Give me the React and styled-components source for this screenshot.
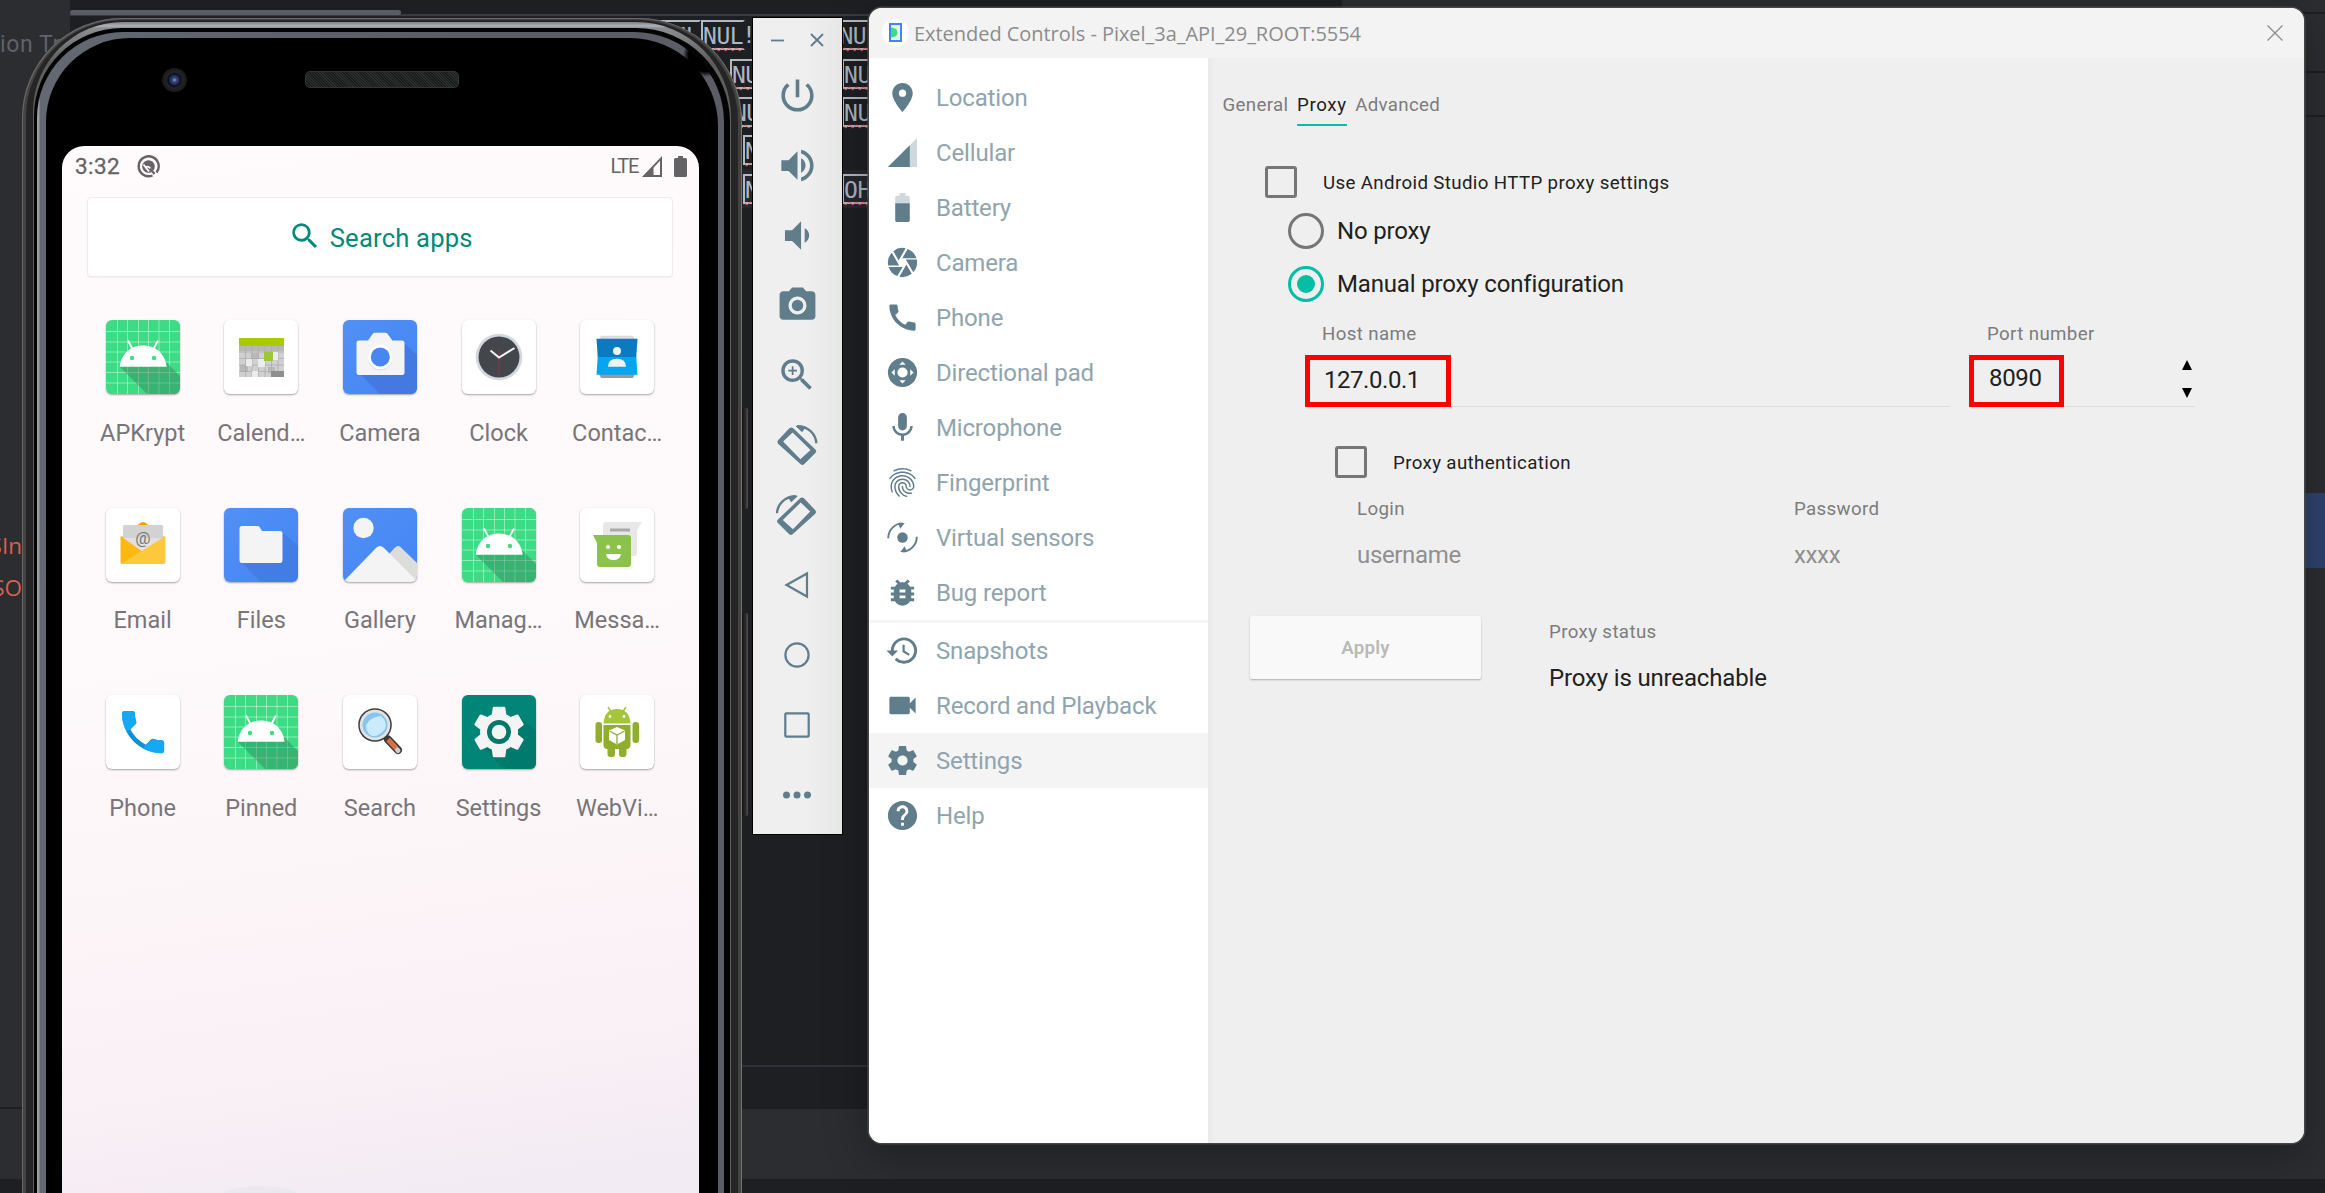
import React from "react";
import styled, { createGlobalStyle, css } from "styled-components";
import {
  MdPlace, MdCamera, MdCall, MdMic, MdFingerprint, MdBugReport, MdHistory, MdVideocam, MdHelp,
  MdPowerSettingsNew, MdVolumeUp, MdVolumeDown, MdPhotoCamera, MdZoomIn, MdSearch,
} from "react-icons/md";

const slate = "#607d8b";
const teal = "#00bfa5";

const GlobalStyle = createGlobalStyle`
  *, *::before, *::after { box-sizing: border-box; }
  html, body { margin: 0; padding: 0; }
  body { font-family: Roboto, "Liberation Sans", sans-serif; background: #1e1f22; overflow: hidden; }
  svg { display: block; flex: none; }
`;

const Desktop = styled.div`
  position: relative;
  width: 2325px;
  height: 1193px;
  overflow: hidden;
`;

/* ---------- IDE behind the windows ---------- */

const Ide = styled.div`
  display: flex;
  flex-direction: column;
  height: 100%;
  background: #1e1f22;
`;
const IdeMain = styled.div`
  display: flex;
  height: 1109px;
`;
const IdeTree = styled.div`
  width: 70px;
  flex: none;
  padding-top: 27px;
  background: #2b2d30;
  border-bottom: 2px solid #1e1f22;
  font-size: 23px;
  color: #5f6268;
  overflow: hidden;
  white-space: nowrap;
`;
const TreeLabel = styled.div`
  line-height: 36px;
  letter-spacing: 0.6px;
`;
const TreeErrors = styled.div`
  width: 22px;
  margin-top: 462px;
  display: flex;
  flex-direction: column;
  align-items: flex-end;
  font: 22.5px/42.4px "Open Sans", sans-serif;
  color: #d9604f;
`;
const Editor = styled.div`
  flex: 1;
  display: flex;
  flex-direction: column;
`;
const ScrollTrack = styled.div`
  height: 16px;
  padding-top: 10px;
  border-bottom: 2px solid #393b40;
`;
const ScrollThumb = styled.div`
  width: 331px;
  height: 5px;
  border-radius: 3px;
  background: #5a5d63;
`;
const CodeLine = styled.div`
  display: flex;
  align-items: center;
  height: 38.4px;
  padding-left: ${(p) => p.$indent}px;
  background: ${(p) => (p.$current ? "#26282e" : "transparent")};
`;
const Token = styled.span`
  height: 30px;
  margin-left: ${(p) => p.$gap || 0}px;
  border: 2px solid #b4b8bf;
  border-right-color: transparent;
  font: 23px/28px "DejaVu Sans Mono", monospace;
  letter-spacing: -0.5px;
  color: #a9b7c6;
  text-decoration: underline wavy #f75464 1px;
  text-underline-offset: 3px;
  white-space: pre;
`;
const Plain = styled.span`
  margin-left: -3px;
  font: 23px/28px "DejaVu Sans Mono", monospace;
  color: #a9b7c6;
  letter-spacing: -0.5px;
`;
const EditorFoot = styled.div`
  margin-top: auto;
  height: 44px;
  border-top: 2px solid #303238;
`;
const IdeRight = styled.div`
  width: 983px;
  flex: none;
  display: flex;
  flex-direction: column;
  background: #2b2d30;
`;
const RightRule = styled.div`
  height: ${(p) => p.$h}px;
  border-bottom: 2px solid #1e1f22;
`;
const RightSelection = styled.div`
  height: 75px;
  margin-top: 376px;
  background: #2e436e;
`;
const IdeBar = styled.div`
  height: 70px;
  background: #2b2d30;
`;

/* ---------- Emulator phone ---------- */

const Phone = styled.div`
  position: absolute;
  left: 22px;
  top: 18px;
  width: 720px;
  height: 1300px;
  padding: 2px 4px 0;
  border-radius: 100px 104px 0 0;
  background: #454243;
  box-shadow: inset 1px 1px 0 #6a6765, inset -1px 0 0 #77736f;
`;
const SideButton = styled.div`
  position: absolute;
  right: -6px;
  top: ${(p) => p.$top}px;
  width: 6px;
  height: ${(p) => p.$h}px;
  border-radius: 0 2px 2px 0;
  background: linear-gradient(90deg, #141414, #2c2b2b 60%, #545252);
`;
const Rail = styled.div`
  height: 100%;
  padding: 2px 7px 0;
  border-radius: 97px 101px 0 0;
  background: #262526;
`;
const Chrome = styled.div`
  height: 100%;
  padding: 6px 1px 0;
  border-radius: 90px 95px 0 0;
  background: linear-gradient(180deg, #7e8183, #b0b4b5 4px, #8b8e90 6px, #5e5e5e 40px);
`;
const Seam = styled.div`
  height: 100%;
  padding: 4px 6px 0 3px;
  border-radius: 88px 94px 0 0;
  background: #040404;
`;
const Glint = styled.div`
  height: 100%;
  padding: 6px 6px 0 9px;
  border-radius: 86px 90px 0 0;
  background:
    radial-gradient(circle 22px at calc(100% - 19px) 23px, #000 75%, transparent),
    linear-gradient(90deg, #9a9fa3 0, #9a9fa3 2px, #636873 3px, #5b5d66 60%);
`;
const Face = styled.div`
  display: flex;
  flex-direction: column;
  height: 100%;
  padding: 0 19px 0 16px;
  border-radius: 84px 88px 0 0;
  background: #000;
`;
const Sensors = styled.div`
  display: flex;
  align-items: flex-start;
  height: 108px;
  padding: 30px 0 0 100px;
`;
const Lens = styled.div`
  width: 25px;
  height: 24px;
  border-radius: 50%;
  background: radial-gradient(circle, #8ea0d8 0, #3a4a86 2px, #1d2547 5px, #0b0e1c 6px, #222326 8px, #1a1a1c 12px);
`;
const Speaker = styled.div`
  width: 154px;
  height: 17px;
  margin: 3px 0 0 118px;
  border: 1px solid #333635;
  border-radius: 5px;
  background: repeating-linear-gradient(45deg, #1a1d1c 0 1px, #2a2e2c 1px 2px);
`;
const Screen = styled.div`
  flex: 1;
  width: 637px;
  border-radius: 22px 22px 0 0;
  background:
    radial-gradient(ellipse 60px 14px at 198px 1049px, #ebe9ef 60%, transparent 66%),
    linear-gradient(172deg, #fffafc 0, #fdf8fa 560px, #fcf5f8 780px, #f9f0f5 960px, #f2ebf3 1100px);
`;
const StatusBar = styled.div`
  display: flex;
  align-items: center;
  height: 40px;
  padding: 0 12px 0 13px;
  color: #666366;
`;
const Clock = styled.span`
  width: 62px;
  margin-top: -1px;
  font-size: 22.5px;
  letter-spacing: 0.4px;
  -webkit-text-stroke: 0.3px currentColor;
`;
const Network = styled.span`
  margin: -1px 4px 0 auto;
  font-size: 20px;
  letter-spacing: -1.3px;
`;
const BatteryGap = styled.div`
  width: 12px;
`;
const SearchBox = styled.div`
  display: flex;
  align-items: center;
  justify-content: center;
  gap: 7.5px;
  height: 80px;
  margin: 11px 26px 0 25px;
  padding: 1px 0 0 1px;
  border: 1px solid #f0eaed;
  border-radius: 4px;
  background: #fff;
  color: #00897b;
  font-size: 25.6px;
  letter-spacing: 0.2px;
  box-shadow: 0 1px 1px rgba(0, 0, 0, 0.04);
  svg { margin-top: -4px; }
`;
const AppGrid = styled.div`
  display: grid;
  grid-template-columns: repeat(5, 118.65px);
  grid-auto-rows: 187.5px;
  margin: 43px 0 0 21.3px;
`;
const AppCell = styled.div`
  display: flex;
  flex-direction: column;
  align-items: center;
`;
const AppTile = styled.div`
  width: 74px;
  height: 74px;
  border-radius: 6px;
  overflow: hidden;
  background: ${(p) => p.$bg};
  box-shadow: 0 1px 2px rgba(0, 0, 0, 0.35);
`;
const AppName = styled.div`
  margin-top: 24.600px;
  line-height: 28px;
  font-size: 23.5px;
  color: #787578;
`;

/* ---------- Emulator toolbar ---------- */

const Toolbar = styled.div`
  position: absolute;
  left: 752px;
  top: 17px;
  width: 91px;
  height: 818px;
  border: 1px solid #000;
  background: linear-gradient(90deg, #efefef 60%, #e7e7e7);
  color: ${slate};
`;
const ToolWindowButtons = styled.div`
  display: flex;
  align-items: center;
  gap: 26px;
  height: 42px;
  padding: 2px 0 0 18px;
`;
const ToolList = styled.div`
  display: flex;
  flex-direction: column;
  padding-right: 1px;
`;
const Tool = styled.div`
  display: flex;
  align-items: center;
  justify-content: center;
  height: 70px;
`;

/* ---------- Extended controls ---------- */

const Window = styled.div`
  position: absolute;
  left: 869px;
  top: 8px;
  width: 1435px;
  height: 1135px;
  display: flex;
  flex-direction: column;
  border-radius: 13px;
  overflow: hidden;
  background: #efefef;
`;
const WindowShadow = styled.div`
  position: absolute;
  left: 869px;
  top: 8px;
  width: 1435px;
  height: 1135px;
  border-radius: 13px;
  box-shadow: 0 0 0 1.6px #464646, 0 12px 46px rgba(0, 0, 0, 0.32);
`;
const TitleBar = styled.div`
  display: flex;
  align-items: center;
  height: 50px;
  padding: 0 21px 0 12.5px;
  background: #f3f3f3;
  color: #8c8c8c;
  font: 20px/27px "Open Sans", "Noto Sans", sans-serif;
  letter-spacing: -0.04px;
`;
const Title = styled.span`
  flex: 1;
  margin: 1px 0 0 5.5px;
`;
const AppBadge = styled.div`
  display: flex;
  align-items: center;
  justify-content: center;
  width: 27px;
  height: 27px;
  margin-top: -2px;
  border-radius: 50%;
  background: #fff;
`;
const WindowBody = styled.div`
  display: flex;
  flex: 1;
`;
const Sidebar = styled.div`
  width: 339px;
  flex: none;
  padding-top: 12px;
  background: #fff;
`;
const NavItem = styled.div`
  display: flex;
  align-items: center;
  height: 55px;
  padding-left: 16px;
  gap: 16px;
  background: ${(p) => (p.$active ? "#f4f4f4" : "transparent")};
  color: #90a4ae;
  font-size: 24px;
  letter-spacing: -0.16px;
  svg { color: ${slate}; }
`;
const NavRule = styled.div`
  height: 3px;
  background: #f5f5f5;
`;
const Content = styled.div`
  flex: 1;
  background: linear-gradient(90deg, #eaeaea, #efefef 7px);
`;
const Tabs = styled.div`
  display: flex;
  gap: 8.5px;
  padding: 27px 0 0 14.5px;
`;
const Tab = styled.div`
  height: 41px;
  line-height: 41px;
  font-size: 18.7px;
  letter-spacing: ${(p) => p.$ls}px;
  color: ${(p) => (p.$active ? "#212121" : "#7c7c7c")};
  border-bottom: 2px solid ${(p) => (p.$active ? teal : "transparent")};
`;
const big = css`
  font-size: 24px;
  letter-spacing: -0.16px;
`;
const small = css`
  font-size: 18.7px;
  letter-spacing: 0.37px;
`;
const OptionRow = styled.div`
  display: flex;
  align-items: center;
  height: ${(p) => p.$h}px;
  margin-top: ${(p) => p.$top}px;
  padding-left: ${(p) => p.$indent}px;
  padding-top: ${(p) => (p.$big ? 0 : 2)}px;
  gap: ${(p) => p.$gap}px;
  color: #212121;
  ${(p) => (p.$big ? big : small)}
`;
const CheckBox = styled.div`
  flex: none;
  width: 32px;
  height: 32px;
  margin-bottom: 2px;
  border: 3px solid #767676;
  border-radius: 3px;
`;
const Radio = styled.div`
  display: flex;
  align-items: center;
  justify-content: center;
  width: 36px;
  height: 36px;
  border: 3px solid ${(p) => (p.$on ? teal : "#767676")};
  border-radius: 50%;
  &::after {
    content: "";
    width: 18px;
    height: 18px;
    border-radius: 50%;
    background: ${(p) => (p.$on ? teal : "transparent")};
  }
`;
const Endpoint = styled.div`
  display: flex;
  gap: 20px;
  margin: 20px 0 0 98px;
`;
const Field = styled.div`
  position: relative;
  width: ${(p) => p.$w}px;
  padding-left: ${(p) => p.$pad}px;
`;
const FieldLabel = styled.div`
  line-height: 24px;
  color: #7c7c7c;
  ${small}
`;
const FieldInput = styled.div`
  display: flex;
  justify-content: space-between;
  height: 61px;
  margin-left: -16px;
  padding: ${(p) => p.$top}px 3px 0 ${(p) => p.$left}px;
  border-bottom: 1px solid #dedede;
  line-height: 28px;
  font-size: 24px;
  letter-spacing: ${(p) => p.$ls}px;
  color: #212121;
`;
const Marker = styled.div`
  position: absolute;
  left: -1px;
  top: 33px;
  width: ${(p) => p.$w}px;
  height: 52px;
  border: 5px solid #ff0000;
`;
const Spinner = styled.div`
  display: flex;
  flex-direction: column;
  gap: 18px;
  margin-top: -4px;
`;
const Credentials = styled.div`
  display: grid;
  grid-template-columns: 437px 1fr;
  margin: 19px 0 0 149px;
`;
const Placeholder = styled.div`
  margin-top: 19.5px;
  line-height: 28px;
  color: #8f8f8f;
  font-size: 24px;
  letter-spacing: -0.35px;
`;
const Footer = styled.div`
  display: flex;
  gap: 68px;
  margin: 47.5px 0 0 42px;
`;
const ApplyButton = styled.div`
  display: flex;
  align-items: center;
  justify-content: center;
  width: 231px;
  height: 63px;
  border-radius: 2px;
  background: #f9f9f9;
  box-shadow: 0 1px 2px rgba(0, 0, 0, 0.28);
  color: #bababa;
  font-size: 18.7px;
  font-weight: 600;
  letter-spacing: 0.2px;
`;
const Status = styled.div`
  padding-top: 3.5px;
`;
const StatusValue = styled.div`
  margin-top: 20px;
  line-height: 28px;
  color: #212121;
  ${big}
`;

/* ---------- Icons ---------- */

const GEAR = "M19.43 12.98c.04-.32.07-.64.07-.98s-.03-.66-.07-.98l2.11-1.65c.19-.15.24-.42.12-.64l-2-3.46c-.12-.22-.39-.3-.61-.22l-2.49 1c-.52-.4-1.08-.73-1.69-.98l-.38-2.65A.488.488 0 0 0 14 2h-4c-.25 0-.46.18-.49.42l-.38 2.65c-.61.25-1.17.59-1.69.98l-2.49-1c-.23-.09-.49 0-.61.22l-2 3.46c-.13.22-.07.49.12.64l2.11 1.65c-.04.32-.07.65-.07.98s.03.66.07.98l-2.11 1.65c-.19.15-.24.42-.12.64l2 3.46c.12.22.39.3.61.22l2.49-1c.52.4 1.08.73 1.69.98l.38 2.65c.03.24.24.42.49.42h4c.25 0 .46-.18.49-.42l.38-2.65c.61-.25 1.17-.59 1.69-.98l2.49 1c.23.09.49 0 .61-.22l2-3.46c.12-.22.07-.49-.12-.64l-2.11-1.65z";
const HANDSET = "M6.62 10.79c1.44 2.83 3.76 5.14 6.59 6.59l2.2-2.2c.27-.27.67-.36 1.02-.24 1.12.37 2.33.57 3.57.57.55 0 1 .45 1 1V20c0 .55-.45 1-1 1-9.39 0-17-7.61-17-17 0-.55.45-1 1-1h3.5c.55 0 1 .45 1 1 0 1.25.2 2.45.57 3.57.11.35.03.74-.25 1.02l-2.2 2.2z";

const GearIcon = ({ size }) => (
  <svg width={size} height={size} viewBox="0 0 24 24" fill="currentColor" fillRule="evenodd">
    <path d={GEAR + "M12 15.5c-1.93 0-3.5-1.57-3.5-3.5s1.57-3.5 3.5-3.5 3.5 1.57 3.5 3.5-1.57 3.5-3.5 3.5z"} />
  </svg>
);
const CellularIcon = () => (
  <svg width="35" height="35" viewBox="0 0 24 24" fill="currentColor">
    <path d="M2 22h20V2z" fillOpacity=".3" />
    <path d="M17 7L2 22h15z" />
  </svg>
);
const BatteryIcon = () => (
  <svg width="35" height="35" viewBox="0 0 24 24" fill="currentColor">
    <path fillOpacity=".3" d="M17 5.33C17 4.6 16.4 4 15.67 4H14V2h-4v2H8.33C7.6 4 7 4.6 7 5.33V9h10V5.33z" />
    <path d="M7 9v11.67C7 21.4 7.6 22 8.33 22h7.33c.74 0 1.34-.6 1.34-1.33V9H7z" />
  </svg>
);
const DpadIcon = () => (
  <svg width="35" height="35" viewBox="0 0 24 24">
    <circle cx="12" cy="12" r="10" fill="currentColor" />
    <circle cx="12" cy="12" r="3.5" fill="#fff" />
    <path fill="#fff" d="M12 4.4l2.2 2.3H9.8zM12 19.6l2.2-2.3H9.8zM4.4 12l2.3-2.2v4.4zM19.6 12l-2.3-2.2v4.4z" />
  </svg>
);
const SensorsIcon = () => (
  <svg width="35" height="35" viewBox="0 0 24 24" fill="none" stroke="currentColor" strokeWidth="1.3">
    <circle cx="12" cy="12" r="3.6" fill="currentColor" stroke="none" />
    <path d="M2.2 12.5C2.2 7 6.5 2.3 12 2.3M21.8 11.5c0 5.500-4.300 10.200-9.800 10.200" />
    <path fill="currentColor" stroke="none" d="M9 2.200l4.500-.2-3 4zM15 21.800l-4.500.2 3-4z" />
  </svg>
);
const RotateIcon = ({ flip }) => (
  <svg width="42" height="42" viewBox="-2 -2 124 124">
    <g transform={flip ? "translate(118 0) scale(-1 1)" : undefined}>
      <path fill="currentColor" fillRule="evenodd" d="M4 46L38 10q5-4 10 0l67 64q4 5 0 9l-34 34q-5 4-10 0L4 56q-4-5 0-10zM19 50l51 52 30-27-53-52z" />
      <path fill="none" stroke="currentColor" strokeWidth="7" d="M60 4.500C92 4 116 27 117 55" />
      <path fill="currentColor" d="M55 3l20 19 10-14z" />
    </g>
  </svg>
);
const Shape = ({ children, size = 28 }) => (
  <svg width={size} height={size} viewBox="0 0 28 28" fill="none" stroke="currentColor" strokeWidth="2.2">{children}</svg>
);

const RobotArt = () => (
  <svg width="74" height="74" viewBox="0 0 74 74">
    <path stroke="#fff" strokeOpacity=".42" strokeWidth="1" d="M11.500 0v74M21.500 0v74M32.500 0v74M42.500 0v74M53 0v74M63.500 0v74M0 11.500h74M0 22h74M0 32h74M0 42h74M0 52.500h74M0 63h74" />
    <path fill="#2f7d5b" fillOpacity=".42" d="M14 47l27 27h33V56L58 40z" />
    <path fill="#fff" d="M13.700 46.700C15 34 24.500 25.500 37 25.500S59.300 34 60.600 46.700z" />
    <path stroke="#fff" strokeWidth="1.800" d="M22 20.500l4.500 8.500M52 20.500L47.500 29" />
    <circle cx="26" cy="38" r="2.200" fill="#3ddc84" />
    <circle cx="48" cy="38" r="2.200" fill="#3ddc84" />
  </svg>
);
const CalendarArt = () => (
  <svg width="74" height="74" viewBox="0 0 74 74">
    <path fill="#d0d0d0" d="M15 25h45v32H15z" />
    <path fill="#b8b8b8" d="M15 25h45v6H15zM27 33h8v6h-8zM16 45h8v7h-8zM44 47h7v6h-7z" />
    <path stroke="#aaa" strokeWidth=".7" d="M21.500 25v32M28 25v32M34.500 25v32M41 25v32M47.500 25v32M54 25v32M15 32h45M15 38.500h45M15 45h45M15 51.500h45" />
    <path fill="#ececec" d="M22 39h6v7h-6zM34 39h7v8h-7zM48 32h6v8h-6zM28 51h6v6h-6z" />
    <path fill="#8e8e8e" d="M47 51h13v6H47z" />
    <path fill="#9cc837" d="M40 31.500h9v9.500h-9z" />
    <path fill="#aacb00" d="M15 18h45v8H15z" />
  </svg>
);
const CameraArt = () => (
  <svg width="74" height="74" viewBox="0 0 74 74">
    <path fill="#4379e0" d="M17 54l20 20h37V35L60 22z" />
    <path fill="#f4f4f4" d="M16 20.500h9l5-7q.6-.8 2-.8h10.500q1.200 0 1.800.8l5 7H59q2.500 0 2.500 2.500v29.500q0 2.500-2.500 2.500H16q-2.500 0-2.500-2.500V23q0-2.500 2.500-2.500z" />
    <circle cx="37.300" cy="38" r="12.300" fill="#d9d9de" />
    <circle cx="37.300" cy="37" r="12.300" fill="#fff" />
    <circle cx="37.300" cy="37" r="9.500" fill="#4a86f0" />
  </svg>
);
const ClockArt = () => (
  <svg width="74" height="74" viewBox="0 0 74 74">
    <circle cx="37" cy="37" r="23.300" fill="#d3d7df" />
    <circle cx="37" cy="37" r="20.500" fill="#43464b" />
    <path stroke="#a33" strokeWidth=".8" d="M37 29.500V55" />
    <path fill="none" stroke="#f2f2f2" strokeWidth="2" d="M28.500 30.500L37 37.500l15.500-9.500" />
  </svg>
);
const ContactsArt = () => (
  <svg width="74" height="74" viewBox="0 0 74 74">
    <path fill="#dcdcdc" d="M21 15.700h32l2 4H19z" />
    <path fill="#9a9a9a" d="M19 54h36l-2 4H21z" />
    <path fill="#0b7bc1" d="M16.500 18.700h41L56.300 37H17.700z" />
    <path fill="#07a5f0" d="M17.700 37h38.600l1.200 17.700h-41z" />
    <circle cx="37" cy="31" r="4" fill="#f2f2f2" />
    <path fill="#f2f2f2" d="M28 46.700q0-8 9-8t9 8z" />
  </svg>
);
const EmailArt = () => (
  <svg width="74" height="74" viewBox="0 0 74 74">
    <path fill="#f29b13" d="M14.500 30L35 14.500q2-1 4 0L59.500 30z" />
    <path fill="#e1e1e1" d="M17 19q0-2 2-2h36q2 0 2 2v27H17z" />
    <path fill="#d2d2d2" d="M17 19q0-2 2-2h36q2 0 2 2v11H17z" />
    <text x="37" y="36" textAnchor="middle" fontFamily="Roboto, sans-serif" fontSize="17" fill="#777">@</text>
    <path fill="#fdb913" d="M14.500 28L37 44 16 56q-1.500 0-1.500-2z" />
    <path fill="#fec83c" d="M59.500 28v26q0 2-2 2H15z" />
  </svg>
);
const FilesArt = () => (
  <svg width="74" height="74" viewBox="0 0 74 74">
    <path fill="#4179e2" fillOpacity=".75" d="M17 54l20 20h37V38L58 24z" />
    <path fill="#f4f4f4" d="M18 18h15.500q1.500 0 2 1l2.500 4H56q2.500 0 2.500 2.500V52q0 3-2.500 3H18q-2.500 0-2.500-3V20.500Q15.500 18 18 18z" />
  </svg>
);
const GalleryArt = () => (
  <svg width="74" height="74" viewBox="0 0 74 74">
    <circle cx="20.500" cy="20" r="10.200" fill="#f4f4f4" />
    <path fill="#dcdcdc" d="M46 46l6.500-7q2.500-2 5 0L74 55v18H60z" />
    <path fill="#f4f4f4" d="M2 72l31.500-32.500q3.500-3 7 0L73 72q-1 2-3 2H5q-2 0-3-2z" />
  </svg>
);
const MessagingArt = () => (
  <svg width="74" height="74" viewBox="0 0 74 74">
    <path fill="#e7e7e7" d="M26 14h36l-5 8v23q0 3-3 3H26q-3 0-3-3V17q0-3 3-3z" />
    <path fill="#a9a9a9" d="M30 20.500h20v3H30z" />
    <path fill="#8bc34a" d="M13 27h35q3 0 3 3v26q0 3-3 3H20q-3 0-3-3V35z" />
    <circle cx="28" cy="39" r="2.100" fill="#fff" />
    <circle cx="39" cy="39" r="2.100" fill="#fff" />
    <path fill="#fff" d="M26 46h15q-1 6-7.500 6T26 46z" />
  </svg>
);
const PhoneArt = () => (
  <svg width="74" height="74" viewBox="0 0 74 74">
    <g transform="translate(9 9) scale(2.340)">
      <path fill="#0f8fd8" d={HANDSET} />
      <path fill="#16a9f3" d="M3 4c0-.55.45-1 1-1h3.500c.55 0 1 .45 1 1 0 1.250.2 2.450.57 3.570.11.350.03.740-.25 1.020l-2.200 2.200-1.600 1C3.600 9.500 3 7 3 4zM13.210 17.380l2.200-2.200c.27-.27.67-.36 1.020-.24 1.120.37 2.330.57 3.570.57.55 0 1 .45 1 1V20c0 .55-.45 1-1 1-3 0-5.500-.7-8-2z" />
    </g>
  </svg>
);
const SearchArt = () => (
  <svg width="74" height="74" viewBox="0 0 74 74">
    <path stroke="#3a3a3a" strokeWidth="8" strokeLinecap="round" d="M45 44.500l10 10.500" />
    <path stroke="#d9703f" strokeWidth="5" d="M45 44.500l8.500 9" />
    <path stroke="#ccc" strokeWidth="5" strokeLinecap="round" d="M54.500 55l.5.500" />
    <circle cx="32" cy="30" r="16.800" fill="#3d3d3d" />
    <circle cx="32" cy="30" r="15.300" fill="#e3e3e3" />
    <circle cx="32" cy="30" r="12.500" fill="#86c5ee" />
    <path fill="#c9ebfb" d="M23 32q1-9 15-11 7 6 4 13-6 8-13 7-5-2-6-9z" />
  </svg>
);
const SettingsArt = () => (
  <svg width="74" height="74" viewBox="0 0 74 74">
    <path fill="#007a6c" d="M20 52l22 22h32V36L58 22z" />
    <g transform="translate(6.700 6.700) scale(2.530)"><path fill="#f4f4f4" d={GEAR} /></g>
    <circle cx="37" cy="37" r="12" fill="#00796b" />
    <circle cx="37" cy="37" r="7.300" fill="#f4f4f4" />
  </svg>
);
const WebViewArt = () => (
  <svg width="74" height="74" viewBox="0 0 74 74">
    <g fill="#8fae2b">
      <rect x="15.500" y="27" width="6.500" height="21" rx="3" />
      <rect x="52.500" y="27" width="6.500" height="21" rx="3" />
      <rect x="27.500" y="46" width="7.500" height="16" rx="3" />
      <rect x="39" y="46" width="7.500" height="16" rx="3" />
      <path d="M23.500 30h27v20q0 4-4 4h-19q-4 0-4-4z" />
    </g>
    <path fill="#a4c639" d="M23.500 28.500q1-14.500 13.500-14.500t13.500 14.500z" />
    <path stroke="#a4c639" strokeWidth="1.500" d="M28 12l3.500 5M46 12l-3.500 5" />
    <circle cx="30" cy="21.500" r="1.400" fill="#fff" />
    <circle cx="44" cy="21.500" r="1.400" fill="#fff" />
    <path fill="#fff" d="M37 32l8 3.500v9.500l-8 4.500-8-4.500v-9.500z" />
    <path fill="none" stroke="#8fae2b" strokeWidth="1.300" d="M29.500 36l7.500 4 7.500-4M37 40v9" />
  </svg>
);

/* ---------- Data ---------- */

const blue = "linear-gradient(135deg, #5290f5, #4285f4)";
const apps = [
  ["APKrypt", RobotArt, "#3ddc84"], ["Calend…", CalendarArt, "#fff"], ["Camera", CameraArt, blue],
  ["Clock", ClockArt, "#fff"], ["Contac…", ContactsArt, "#fff"],
  ["Email", EmailArt, "#fff"], ["Files", FilesArt, blue], ["Gallery", GalleryArt, blue],
  ["Manag…", RobotArt, "#3ddc84"], ["Messa…", MessagingArt, "#fff"],
  ["Phone", PhoneArt, "#fff"], ["Pinned", RobotArt, "#3ddc84"], ["Search", SearchArt, "#fff"],
  ["Settings", SettingsArt, "#008577"], ["WebVi…", WebViewArt, "#fff"],
];

const navTop = [
  ["Location", <MdPlace size={35} />], ["Cellular", <CellularIcon />], ["Battery", <BatteryIcon />],
  ["Camera", <MdCamera size={35} />], ["Phone", <MdCall size={35} />], ["Directional pad", <DpadIcon />],
  ["Microphone", <MdMic size={35} />], ["Fingerprint", <MdFingerprint size={35} />],
  ["Virtual sensors", <SensorsIcon />], ["Bug report", <MdBugReport size={35} />],
];
const navBottom = [
  ["Snapshots", <MdHistory size={35} />], ["Record and Playback", <MdVideocam size={35} />],
  ["Settings", <GearIcon size={35} />], ["Help", <MdHelp size={35} />],
];

const tools = [
  <MdPowerSettingsNew size={43} />, <MdVolumeUp size={43} />, <MdVolumeDown size={43} />,
  <MdPhotoCamera size={43} />, <MdZoomIn size={42} />, <RotateIcon />, <RotateIcon flip />,
  <Shape><path d="M3.500 14L24 2.500v23z" /></Shape>,
  <Shape><circle cx="14" cy="14" r="11.600" /></Shape>,
  <Shape><rect x="2.300" y="2.300" width="23.400" height="23.400" rx="1" /></Shape>,
  <Shape><path d="M3.500 14h.01M14 14h.01M24.500 14h.01" strokeWidth="7" strokeLinecap="round" /></Shape>,
];

function IdeBackdrop() {
  return (
    <Ide>
      <IdeMain>
        <IdeTree>
          <TreeLabel>ion Tr</TreeLabel>
          <TreeErrors><span>SIn</span><span>SO</span></TreeErrors>
        </IdeTree>
        <Editor>
          <ScrollTrack><ScrollThumb /></ScrollTrack>
          <CodeLine $indent={587}><Token>NUL</Token><Token>NUL</Token><Plain>!</Plain><Token $gap={82}>NUL</Token></CodeLine>
          <CodeLine $indent={660}><Token>NUL</Token><Token $gap={68}>NUL</Token></CodeLine>
          <CodeLine $indent={661}><Token>NUL</Token><Token $gap={67}>NUL</Token></CodeLine>
          <CodeLine $indent={673}><Token>NUL</Token></CodeLine>
          <CodeLine $indent={673} $current><Token>NUL</Token><Token $gap={55}>OH</Token></CodeLine>
          <EditorFoot />
        </Editor>
        <IdeRight>
          <RightRule $h={14} />
          <RightRule $h={59} />
          <RightRule $h={44} />
          <RightSelection />
        </IdeRight>
      </IdeMain>
      <IdeBar />
    </Ide>
  );
}

function EmulatorPhone() {
  return (
    <Phone>
      <SideButton $top={390} $h={101} />
      <SideButton $top={595} $h={203} />
      <Rail><Chrome><Seam><Glint><Face>
        <Sensors><Lens /><Speaker /></Sensors>
        <Screen>
          <StatusBar>
            <Clock>3:32</Clock>
            <svg width="23" height="23" viewBox="0 0 23 23" fill="none" stroke="currentColor">
              <path strokeWidth="2.400" d="M19.500 17.500A10 10 0 1 0 15.500 20.500" />
              <circle cx="11.500" cy="11.500" r="6.300" fill="currentColor" stroke="none" />
              <path stroke="#fff" strokeWidth="1.800" d="M6.500 9.500l5.500 7M8.500 13.500q1-3 4-1l2.500 3.500" />
              <path strokeWidth="2.200" d="M13 13.500l4.500 5.500" />
            </svg>
            <Network>LTE</Network>
            <svg width="20" height="21" viewBox="0 0 20 21" fill="currentColor" fillRule="evenodd">
              <path d="M20 0v21H0zM18 4.800L11.500 11.700V19H18z" />
            </svg>
            <BatteryGap />
            <svg width="13" height="21" viewBox="0 0 13 21" fill="currentColor">
              <path d="M4 0h5v2h2.500Q13 2 13 3.500v16q0 1.500-1.500 1.500h-10Q0 21 0 19.500v-16Q0 2 1.500 2H4z" />
            </svg>
          </StatusBar>
          <SearchBox><MdSearch size={34} />Search apps</SearchBox>
          <AppGrid>
            {apps.map(([name, Art, bg]) => (
              <AppCell key={name}>
                <AppTile $bg={bg}><Art /></AppTile>
                <AppName>{name}</AppName>
              </AppCell>
            ))}
          </AppGrid>
        </Screen>
      </Face></Glint></Seam></Chrome></Rail>
    </Phone>
  );
}

function EmulatorToolbar() {
  return (
    <Toolbar>
      <ToolWindowButtons>
        <svg width="13" height="13" viewBox="0 0 13 13" stroke="currentColor" strokeWidth="1.800"><path d="M0 6.500h13" /></svg>
        <svg width="14" height="14" viewBox="0 0 14 14" stroke="currentColor" strokeWidth="1.800"><path d="M1 1l12 12M13 1L1 13" /></svg>
      </ToolWindowButtons>
      <ToolList>{tools.map((icon, i) => <Tool key={i}>{icon}</Tool>)}</ToolList>
    </Toolbar>
  );
}

function ExtendedControls() {
  return (
    <Window>
      <TitleBar>
        <AppBadge>
          <svg width="13" height="19" viewBox="0 0 13 19">
            <rect x="1" y="1" width="11" height="17" fill="#e8f5ee" stroke="#4285f4" strokeWidth="2" />
            <path fill="#3ddc84" d="M2 4.500q6.500.5 6.500 5T2 14.500z" />
          </svg>
        </AppBadge>
        <Title>Extended Controls - Pixel_3a_API_29_ROOT:5554</Title>
        <svg width="16" height="16" viewBox="0 0 16 16" stroke="#8c8c8c" strokeWidth="1.300"><path d="M.5.500l15 15M15.500.500l-15 15" /></svg>
      </TitleBar>
      <WindowBody>
        <Sidebar>
          {navTop.map(([label, icon]) => <NavItem key={label}>{icon}{label}</NavItem>)}
          <NavRule />
          {navBottom.map(([label, icon]) => (
            <NavItem key={label} $active={label === "Settings"}>{icon}{label}</NavItem>
          ))}
        </Sidebar>
        <Content>
          <Tabs>
            <Tab $ls={0.35}>General</Tab>
            <Tab $ls={0.65} $active>Proxy</Tab>
            <Tab $ls={0.3}>Advanced</Tab>
          </Tabs>
          <OptionRow $h={32} $top={40} $indent={57} $gap={26}><CheckBox />Use Android Studio HTTP proxy settings</OptionRow>
          <OptionRow $h={36} $top={15} $indent={80} $gap={13} $big><Radio />No proxy</OptionRow>
          <OptionRow $h={36} $top={17} $indent={80} $gap={13} $big><Radio $on />Manual proxy configuration</OptionRow>
          <Endpoint>
            <Field $w={644} $pad={16}>
              <FieldLabel>Host name</FieldLabel>
              <FieldInput $top={20} $left={18} $ls={-0.45}>127.0.0.1</FieldInput>
              <Marker $w={146} />
            </Field>
            <Field $w={225} $pad={17}>
              <FieldLabel>Port number</FieldLabel>
              <FieldInput $top={18.3} $left={18} $ls={-0.35}>
                8090
                <Spinner>
                  <svg width="10" height="10" viewBox="0 0 10 10"><path d="M5 0l5 10H0z" /></svg>
                  <svg width="10" height="10" viewBox="0 0 10 10"><path d="M5 10L0 0h10z" /></svg>
                </Spinner>
              </FieldInput>
              <Marker $w={95} />
            </Field>
          </Endpoint>
          <OptionRow $h={32} $top={39} $indent={127} $gap={26}><CheckBox />Proxy authentication</OptionRow>
          <Credentials>
            <div><FieldLabel>Login</FieldLabel><Placeholder>username</Placeholder></div>
            <div><FieldLabel>Password</FieldLabel><Placeholder>xxxx</Placeholder></div>
          </Credentials>
          <Footer>
            <ApplyButton>Apply</ApplyButton>
            <Status>
              <FieldLabel>Proxy status</FieldLabel>
              <StatusValue>Proxy is unreachable</StatusValue>
            </Status>
          </Footer>
        </Content>
      </WindowBody>
    </Window>
  );
}

export default function App() {
  return (
    <Desktop>
      <GlobalStyle />
      <IdeBackdrop />
      <WindowShadow />
      <EmulatorPhone />
      <EmulatorToolbar />
      <ExtendedControls />
    </Desktop>
  );
}
